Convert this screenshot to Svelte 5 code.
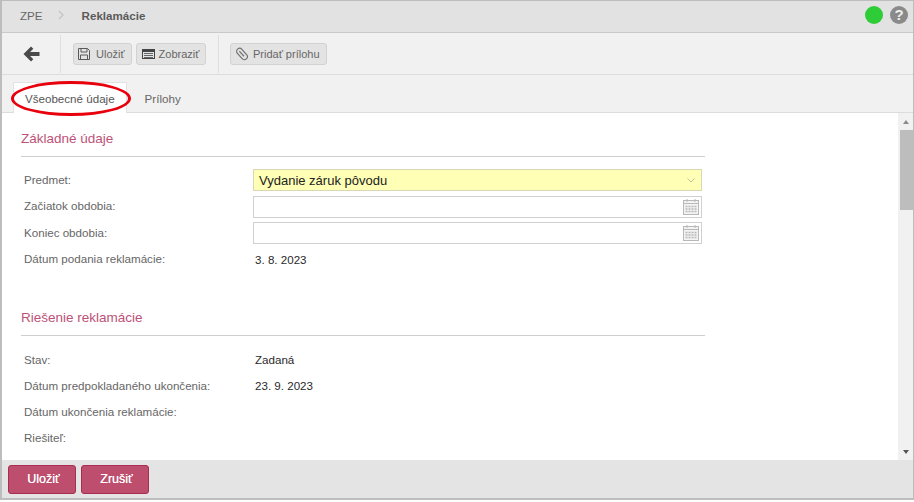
<script>
  const basics = [
    { label: 'Predmet:', kind: 'select', value: 'Vydanie záruk pôvodu' },
    { label: 'Začiatok obdobia:', kind: 'date' },
    { label: 'Koniec obdobia:', kind: 'date' },
    { label: 'Dátum podania reklamácie:', kind: 'text', value: '3. 8. 2023' }
  ];

  const solution = [
    { label: 'Stav:', value: 'Zadaná' },
    { label: 'Dátum predpokladaného ukončenia:', value: '23. 9. 2023' },
    { label: 'Dátum ukončenia reklamácie:', value: '' },
    { label: 'Riešiteľ:', value: '' }
  ];
</script>

<div class="frame">
  <header class="topbar">
    <div class="crumbs">
      <span class="crumb">ZPE</span>
      <svg class="sep" width="6" height="10" viewBox="0 0 6 10" fill="none" stroke="#c4c4c4" stroke-width="1.3"><path d="M1 1l4 4-4 4"/></svg>
      <strong class="crumb-current">Reklamácie</strong>
    </div>
    <div class="status">
      <span class="dot"></span>
      <span class="help">?</span>
    </div>
  </header>

  <div class="toolbar">
    <div class="tool-group back">
      <svg width="17" height="16" viewBox="0 0 17 16" fill="#4a4a4a"><path d="M8 0.500L0.500 8 8 15.500l2.300-2.300L7.100 10H16.500V6H7.100l3.200-3.200z"/></svg>
    </div>
    <div class="tool-group actions">
      <button class="tool">
        <svg width="14" height="12" viewBox="0 0 14 12" fill="none" stroke="#5a5a5a"><path d="M0.500 0.500h9l2 2v9h-11z"/><path d="M3 0.500v3.500h6V0.500M2.500 11.500V7h7v4.500"/></svg>
        Uložiť
      </button>
      <button class="tool">
        <svg width="14" height="10" viewBox="0 0 14 10" fill="none" stroke="#444"><rect x="1.500" y="0.500" width="12" height="9"/><path d="M1.500 2h12" stroke-width="2"/><path d="M3 4.500h9M3 6.500h9M3 8.500h9" stroke="#666"/></svg>
        Zobraziť
      </button>
    </div>
    <div class="tool-group attach">
      <button class="tool">
        <svg width="14" height="14" viewBox="0 0 14 14" fill="none" stroke="#707070" stroke-width="1.200">
          <g transform="rotate(-42 7 7)"><rect x="4" y="0.500" width="6" height="13" rx="3"/><path d="M7 3v7"/></g>
        </svg>
        Pridať prílohu
      </button>
    </div>
  </div>

  <nav class="tabs">
    <span class="tab active">Všeobecné údaje</span>
    <span class="tab">Prílohy</span>
    <span class="callout"></span>
  </nav>

  <div class="body">
    <main class="content">
      <section class="block">
        <h2>Základné údaje</h2>
        <div class="rows">
          {#each basics as row}
            <div class="row">
              <span class="label">{row.label}</span>
              {#if row.kind === 'select'}
                <div class="field select">
                  <span>{row.value}</span>
                  <svg width="8" height="5" viewBox="0 0 8 5" fill="none" stroke="#c2c2a0"><path d="M0.500 0.500L4 4l3.500-3.500"/></svg>
                </div>
              {:else if row.kind === 'date'}
                <div class="field date">
                  <svg width="16" height="16" viewBox="0 0 16 16" fill="none" stroke="#b8b8b8">
                    <rect x="0.500" y="1.500" width="15" height="14" fill="#f3f3f3"/>
                    <path d="M0.500 4.500h15"/>
                    <path d="M4 0v3M12 0v3"/>
                    <path d="M2.500 7.500h11M2.500 10h11M2.500 12.500h11" stroke-width="1.300" stroke-dasharray="2 1"/>
                  </svg>
                </div>
              {:else}
                <span class="value">{row.value}</span>
              {/if}
            </div>
          {/each}
        </div>
      </section>

      <section class="block second">
        <h2>Riešenie reklamácie</h2>
        <div class="rows plain">
          {#each solution as row}
            <div class="row">
              <span class="label">{row.label}</span>
              <span class="value">{row.value}</span>
            </div>
          {/each}
        </div>
      </section>
    </main>

    <div class="scrollbar">
      <span class="arrow up"></span>
      <span class="thumb"></span>
      <span class="arrow down"></span>
    </div>
  </div>

  <footer class="footer">
    <button class="primary">Uložiť</button>
    <button class="primary">Zrušiť</button>
  </footer>
</div>

<style>
  :global(body) {
    margin: 0;
    background: #fff;
  }

  .frame {
    box-sizing: border-box;
    width: 914px;
    height: 500px;
    display: flex;
    flex-direction: column;
    overflow: hidden;
    border: solid #bdbdbd;
    border-width: 1px 1px 2px 2px;
    font-family: "Liberation Sans", Arial, sans-serif;
    font-size: 11.600px;
    color: #666;
  }

  .topbar {
    flex: 0 0 32px;
    box-sizing: border-box;
    display: flex;
    align-items: center;
    justify-content: space-between;
    padding: 0 5px 3px 18px;
    background: #e2e2e2;
    border-bottom: 1px solid #c9c9c9;
  }

  .crumbs {
    display: flex;
    align-items: center;
  }

  .sep {
    margin: 0 18px 0 15px;
  }

  .crumb-current {
    color: #5a5a5a;
  }

  .status {
    display: flex;
    align-items: center;
    gap: 7px;
  }

  .dot {
    width: 18px;
    height: 18px;
    border-radius: 50%;
    background: #2ecc36;
  }

  .help {
    width: 18px;
    height: 18px;
    border-radius: 50%;
    background: #8a8a8a;
    color: #eee;
    font-weight: 700;
    font-size: 15px;
    line-height: 18px;
    text-align: center;
  }

  .toolbar {
    flex: 0 0 42px;
    box-sizing: border-box;
    display: flex;
    align-items: center;
    background: #f1f1f1;
    border-bottom: 1px solid #dcdcdc;
  }

  .tool-group {
    height: 38px;
    display: flex;
    align-items: center;
    gap: 4px;
    box-sizing: border-box;
    border-right: 1px solid #dfdfdf;
  }

  .back {
    width: 59px;
    padding-left: 21px;
  }

  .actions {
    width: 158px;
    padding-left: 12px;
  }

  .attach {
    padding-left: 11px;
    border-right: 0;
  }

  .tool {
    height: 22px;
    display: flex;
    align-items: center;
    gap: 4px;
    padding: 0 6px 0 4px;
    background: #e3e3e3;
    border: 1px solid #d2d2d2;
    border-radius: 3px;
    font: 11px "Liberation Sans", Arial, sans-serif;
    color: #666;
  }

  .tabs {
    position: relative;
    flex: 0 0 38px;
    box-sizing: border-box;
    display: flex;
    align-items: flex-end;
    padding-left: 11px;
    background: #f1f1f1;
    border-bottom: 1px solid #dcdcdc;
  }

  .tab {
    height: 30px;
    box-sizing: border-box;
    padding: 10px 11px 0;
    margin-right: 7px;
  }

  .tab.active {
    background: #fff;
    border: 1px solid #e2e2e2;
    border-bottom: 0;
    margin-bottom: -1px;
    height: 31px;
    padding-top: 9px;
    color: #555;
  }

  .callout {
    position: absolute;
    left: 9px;
    top: 6px;
    box-sizing: border-box;
    width: 120px;
    height: 35px;
    border: 3px solid #e8000d;
    border-radius: 50%;
    pointer-events: none;
  }

  .body {
    flex: 1;
    min-height: 0;
    display: flex;
    background: #fff;
  }

  .content {
    flex: 1;
    overflow: hidden;
    padding-left: 19px;
  }

  .block {
    width: 684px;
  }

  h2 {
    margin: 0;
    height: 44px;
    box-sizing: border-box;
    padding-top: 18px;
    border-bottom: 1px solid #cfcfcf;
    font-size: 13.500px;
    font-weight: 400;
    color: #bc5277;
  }

  .second {
    margin-top: 21.500px;
  }

  .rows {
    padding: 12px 0 0 3px;
    display: flex;
    flex-direction: column;
    gap: 4.500px;
  }

  .rows.plain {
    padding-top: 12px;
    gap: 4px;
  }

  .row {
    display: flex;
    align-items: center;
    height: 22px;
  }

  .label {
    width: 229px;
    flex: none;
    padding-bottom: 2px;
  }

  .plain .label {
    padding-bottom: 0;
  }

  .value {
    margin-left: 2px;
    color: #2a2a2a;
  }

  .field {
    box-sizing: border-box;
    width: 449px;
    height: 22px;
    display: flex;
    align-items: center;
    justify-content: space-between;
    border: 1px solid #d0d0d0;
    background: #fff;
  }

  .select {
    padding: 0 6px 0 5px;
    background: #ffffb5;
    border-color: #d8d8b4;
    font-size: 13px;
    color: #222;
  }

  .date {
    justify-content: flex-end;
    padding-right: 2px;
  }

  .scrollbar {
    flex: 0 0 15px;
    display: flex;
    flex-direction: column;
    background: #f1f1f1;
  }

  .thumb {
    height: 80px;
    margin-left: 2px;
    background: #bdbdbd;
  }

  .arrow {
    height: 17px;
    flex: none;
    position: relative;
  }

  .arrow::after {
    content: '';
    position: absolute;
    left: 5px;
    top: 7px;
    border-left: 3.500px solid transparent;
    border-right: 3.500px solid transparent;
  }

  .up::after {
    border-bottom: 4px solid #8a8a8a;
  }

  .down {
    margin-top: auto;
  }

  .down::after {
    border-top: 4px solid #555;
  }

  .footer {
    flex: 0 0 38px;
    box-sizing: border-box;
    display: flex;
    align-items: center;
    gap: 5px;
    padding-left: 6px;
    background: #e4e4e4;
  }

  .primary {
    width: 68px;
    height: 29px;
    padding: 0 0 0 3px;
    background: #bd4e6d;
    border: 1px solid #a92d50;
    border-radius: 3px;
    color: #fff;
    font: 12.500px "Liberation Sans", Arial, sans-serif;
    text-shadow: 0 0 0.500px #fff;
  }
</style>
